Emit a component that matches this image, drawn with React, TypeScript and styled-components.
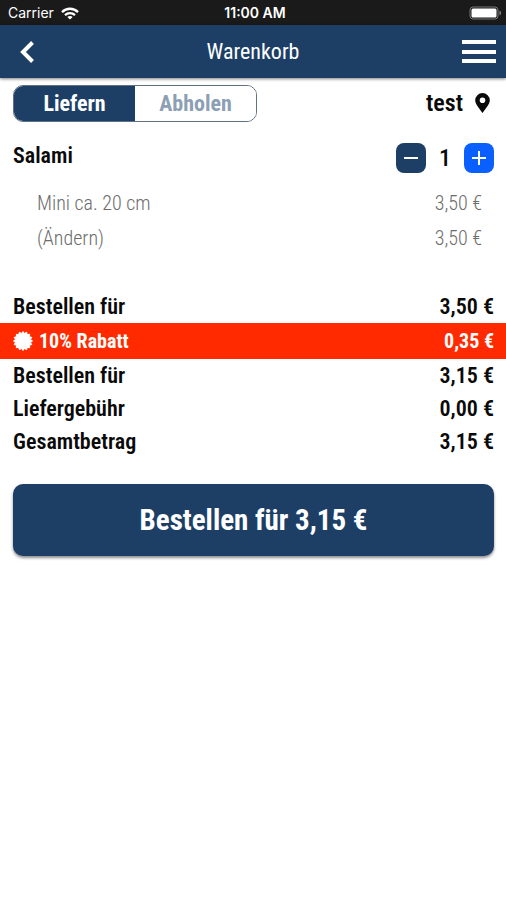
import React, { useState } from "react";
import styled, { createGlobalStyle } from "styled-components";

const navy = "#1d3f66";

const GlobalStyle = createGlobalStyle`
  *, *::before, *::after { box-sizing: border-box; }
  body {
    margin: 0;
    background: #fff;
    color: #0a0a0a;
    font-family: "Roboto Condensed", "Liberation Sans Narrow", Roboto, sans-serif;
  }
  button, a { font-family: inherit; color: inherit; }
  button { border: 0; padding: 0; margin: 0; background: none; cursor: pointer; }
  svg { display: block; }
`;

const StatusBar = styled.div`
  display: grid;
  grid-template-columns: 1fr auto 1fr;
  align-items: center;
  height: 25px;
  padding: 1px 4px 0 8px;
  background: #1a1a1a;
  color: #fff;
  font: 400 14px/20px Inter, sans-serif;
`;

const Carrier = styled.span`
  display: flex;
  align-items: center;
  gap: 7px;
`;

const Clock = styled.span`
  font-weight: 600;
`;

const Battery = styled.span`
  justify-self: end;
`;

const Header = styled.header`
  display: grid;
  grid-template-columns: 48px 1fr 48px;
  align-items: center;
  height: 53px;
  padding: 0 3px;
  background: ${navy};
  color: #fff;
  box-shadow: 0 1px 3px rgba(0, 0, 0, 0.5);
`;

const Title = styled.h1`
  margin: 0;
  text-align: center;
  font-size: 22px;
  font-weight: 400;
  line-height: 28px;
`;

const HeaderButton = styled.button`
  display: grid;
  place-items: center;
  height: 44px;
`;

const Toolbar = styled.div`
  display: flex;
  justify-content: space-between;
  align-items: center;
  padding: 7px 13px 0;
`;

const Segments = styled.div`
  display: flex;
  width: 244px;
  height: 37px;
  overflow: hidden;
  border: 1px solid #5f7183;
  border-radius: 10px;
`;

const Segment = styled.button<{ $active: boolean }>`
  flex: 1;
  font-size: 22px;
  font-weight: 700;
  line-height: 28px;
  background: ${(p) => (p.$active ? navy : "#fff")};
  color: ${(p) => (p.$active ? "#fff" : "#8d9fb5")};
`;

const Place = styled.button`
  display: flex;
  align-items: center;
  gap: 12px;
  padding: 0 3px 2px 0;
  font-size: 24px;
  font-weight: 600;
  line-height: 28px;
`;

const ItemHead = styled.div`
  display: flex;
  justify-content: space-between;
  align-items: center;
  padding: 21px 12px 0 13px;
`;

const ItemName = styled.h2`
  margin: 0;
  padding-bottom: 4px;
  font-size: 22px;
  font-weight: 600;
  line-height: 26px;
`;

const Stepper = styled.div`
  display: grid;
  grid-template-columns: 30px 38px 30px;
  align-items: center;
  text-align: center;
  font-size: 24px;
  font-weight: 500;
  line-height: 30px;
`;

const StepButton = styled.button<{ $bright?: boolean }>`
  display: grid;
  place-items: center;
  width: 30px;
  height: 30px;
  border-radius: 8px;
  color: #fff;
  background: ${(p) => (p.$bright ? "#0a60ff" : navy)};
`;

const Options = styled.ul`
  list-style: none;
  margin: 0;
  padding: 12px 24px 35px 37px;
`;

const Option = styled.li`
  display: flex;
  justify-content: space-between;
  align-items: center;
  height: 35px;
  font-size: 20px;
  font-weight: 300;
  line-height: 24px;
  color: #6c6c6c;

  a { text-decoration: none; }
`;

const Totals = styled.dl`
  margin: 0;
`;

const TotalRow = styled.div<{ $discount?: boolean }>`
  display: flex;
  justify-content: space-between;
  align-items: center;
  height: ${(p) => (p.$discount ? 36 : 33)}px;
  padding: 0 12px 0 13px;
  font-size: ${(p) => (p.$discount ? 20 : 22)}px;
  font-weight: ${(p) => (p.$discount ? 700 : 600)};
  line-height: 26px;
  background: ${(p) => (p.$discount ? "#ff2a00" : "transparent")};
  color: ${(p) => (p.$discount ? "#fff" : "inherit")};

  dt { display: flex; align-items: center; gap: 6px; }
  dd { margin: 0; }
`;

const Footer = styled.div`
  padding: 26px 12px 26px 13px;
`;

const OrderButton = styled.button`
  width: 100%;
  height: 72px;
  border-radius: 10px;
  background: ${navy};
  color: #fff;
  font-size: 29px;
  font-weight: 700;
  line-height: 36px;
  box-shadow: 0 2px 3px rgba(0, 0, 0, 0.45);
`;

const burst = Array.from({ length: 32 }, (_, i) => {
  const r = i % 2 ? 7.7 : 9.5;
  const a = (i * Math.PI) / 16;
  return `${(10 + r * Math.sin(a)).toFixed(2)},${(10 - r * Math.cos(a)).toFixed(2)}`;
}).join(" ");

const WifiIcon = () => (
  <svg width="18" height="13" viewBox="0 0 18 13" fill="none" stroke="#fff" strokeWidth="2.3" aria-hidden="true">
    <path d="M1 5.1C5.5.6 12.5.6 17 5.1" />
    <path d="M4 8.1c2.8-2.6 7.2-2.6 10 0" />
    <path d="M9 12.6 6.300 9.900c1.500-1.300 3.900-1.300 5.400 0Z" fill="#fff" stroke="none" />
  </svg>
);

const BatteryIcon = () => (
  <svg width="33" height="14" viewBox="0 0 33 14" aria-hidden="true">
    <rect x="1" y="1" width="28" height="12" rx="3" fill="none" stroke="#777" />
    <rect x="2.5" y="2.5" width="25" height="9" rx="1.5" fill="#fff" />
    <path d="M30.5 4.5c2 .8 2 4.2 0 5Z" fill="#888" />
  </svg>
);

const BackIcon = () => (
  <svg width="16" height="24" viewBox="0 0 16 24" fill="none" stroke="#fff" strokeWidth="4" aria-hidden="true">
    <path d="M13.5 2.5 4 12l9.5 9.5" />
  </svg>
);

const MenuIcon = () => (
  <svg width="34" height="24" viewBox="0 0 34 24" fill="#fff" aria-hidden="true">
    <path d="M0 0h34v4H0zM0 10h34v4H0zM0 19h34v4H0z" />
  </svg>
);

const PinIcon = () => (
  <svg width="15" height="20" viewBox="0 0 15 20" fill="#0a0a0a" fillRule="evenodd" aria-hidden="true">
    <path d="M7.5 0A7.3 7.3 0 0 1 14.8 7.3C14.8 10.8 12.2 13.5 7.5 20 2.8 13.5.2 10.8.2 7.3A7.3 7.3 0 0 1 7.5 0Zm0 4.5a2.8 2.8 0 1 0 0 5.6 2.8 2.8 0 0 0 0-5.6Z" />
  </svg>
);

const BurstIcon = () => (
  <svg width="20" height="20" viewBox="0 0 20 20" fill="#fff" stroke="#fff" strokeLinejoin="round" aria-hidden="true">
    <polygon points={burst} strokeWidth="1" />
  </svg>
);

const StepIcon = ({ plus }: { plus?: boolean }) => (
  <svg width="14" height="14" viewBox="0 0 14 14" stroke="currentColor" strokeWidth="2" aria-hidden="true">
    <path d={plus ? "M0 7h14M7 0v14" : "M0 7h14"} />
  </svg>
);

const totals = [
  { label: "Bestellen für", amount: "3,50 €" },
  { label: "10% Rabatt", amount: "0,35 €", discount: true },
  { label: "Bestellen für", amount: "3,15 €" },
  { label: "Liefergebühr", amount: "0,00 €" },
  { label: "Gesamtbetrag", amount: "3,15 €" },
];

export default function App() {
  const [mode, setMode] = useState("Liefern");
  const [count, setCount] = useState(1);

  return (
    <>
      <GlobalStyle />
      <StatusBar>
        <Carrier>Carrier <WifiIcon /></Carrier>
        <Clock>11:00 AM</Clock>
        <Battery><BatteryIcon /></Battery>
      </StatusBar>
      <Header>
        <HeaderButton aria-label="Zurück"><BackIcon /></HeaderButton>
        <Title>Warenkorb</Title>
        <HeaderButton aria-label="Menü"><MenuIcon /></HeaderButton>
      </Header>
      <main>
        <Toolbar>
          <Segments>
            {["Liefern", "Abholen"].map((name) => (
              <Segment key={name} $active={mode === name} aria-pressed={mode === name} onClick={() => setMode(name)}>
                {name}
              </Segment>
            ))}
          </Segments>
          <Place>test <PinIcon /></Place>
        </Toolbar>
        <ItemHead>
          <ItemName>Salami</ItemName>
          <Stepper>
            <StepButton aria-label="Weniger" onClick={() => setCount(Math.max(0, count - 1))}><StepIcon /></StepButton>
            <span>{count}</span>
            <StepButton $bright aria-label="Mehr" onClick={() => setCount(count + 1)}><StepIcon plus /></StepButton>
          </Stepper>
        </ItemHead>
        <Options>
          <Option><span>Mini ca. 20 cm</span><span>3,50 €</span></Option>
          <Option><a href="#aendern">(Ändern)</a><span>3,50 €</span></Option>
        </Options>
        <Totals>
          {totals.map((row, i) => (
            <TotalRow key={i} $discount={row.discount}>
              <dt>{row.discount && <BurstIcon />}{row.label}</dt>
              <dd>{row.amount}</dd>
            </TotalRow>
          ))}
        </Totals>
        <Footer>
          <OrderButton>Bestellen für 3,15 €</OrderButton>
        </Footer>
      </main>
    </>
  );
}
